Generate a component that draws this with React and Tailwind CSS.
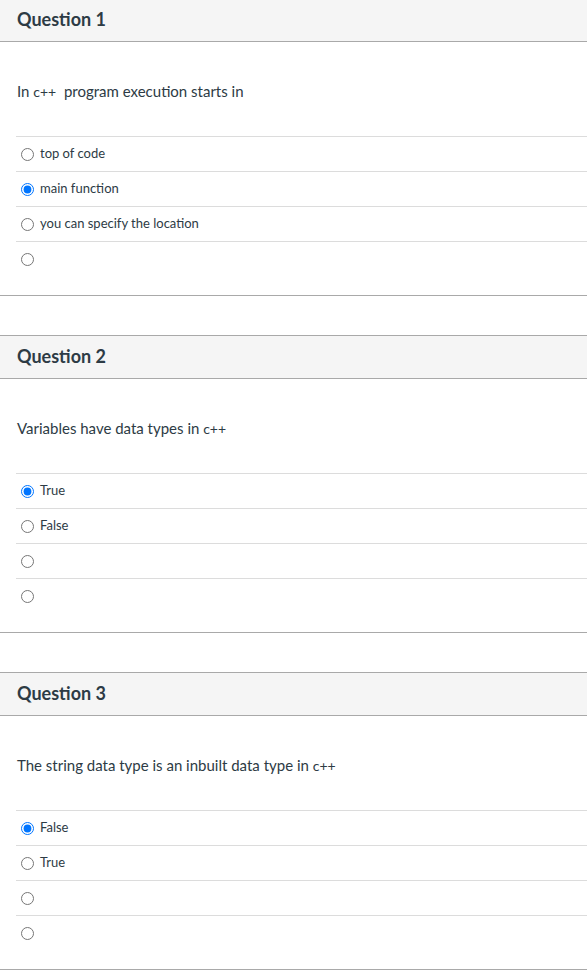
import React from 'react';

const questions = [
  {
    id: 1,
    text: (
      <>
        In <span className="text-[14px]">c++</span>&nbsp; program execution starts in
      </>
    ),
    answers: ['top of code', 'main function', 'you can specify the location', ''],
    selected: 1,
  },
  {
    id: 2,
    text: (
      <>
        Variables have data types in <span className="text-[14px]">c++</span>
      </>
    ),
    answers: ['True', 'False', '', ''],
    selected: 0,
  },
  {
    id: 3,
    text: (
      <>
        The string data type is an inbuilt data type in <span className="text-[14px]">c++</span>
      </>
    ),
    answers: ['False', 'True', '', ''],
    selected: 0,
  },
];

const Question = ({ q, first }) => (
  <div className={`border-y border-[#a9a9a9] ${first ? '' : 'mt-[39px]'}`}>
    <div className="h-[43px] bg-[#f5f5f5] border-b border-[#a9a9a9] flex items-center px-[17px] pb-[2px]">
      <h2 className="text-[18px] font-bold text-[#2d3b45]">Question {q.id}</h2>
    </div>
    <div className="pt-[39px] pb-[19px]">
      <p className="px-[17px] text-[15px] leading-[20px] text-[#2d3b45]">{q.text}</p>
      <div className="mt-[34px] ml-4">
        {q.answers.map((a, i) => (
          <label key={i} className="h-[35px] border-t border-[#dcdcdc] flex items-center text-[13px] text-[#2d3b45]">
            <input
              type="radio"
              name={`q${q.id}`}
              defaultChecked={q.selected === i}
              className="m-0 ml-[5px] mr-[6px] w-[13px] h-[13px] accent-[#0075ff]"
            />
            <span>{a}</span>
          </label>
        ))}
      </div>
    </div>
  </div>
);

export default function App() {
  return (
    <div className="-mt-[2px] bg-white min-h-screen" style={{ fontFamily: 'Lato, "Open Sans", sans-serif' }}>
      {questions.map((q, i) => (
        <Question key={q.id} q={q} first={i === 0} />
      ))}
    </div>
  );
}
